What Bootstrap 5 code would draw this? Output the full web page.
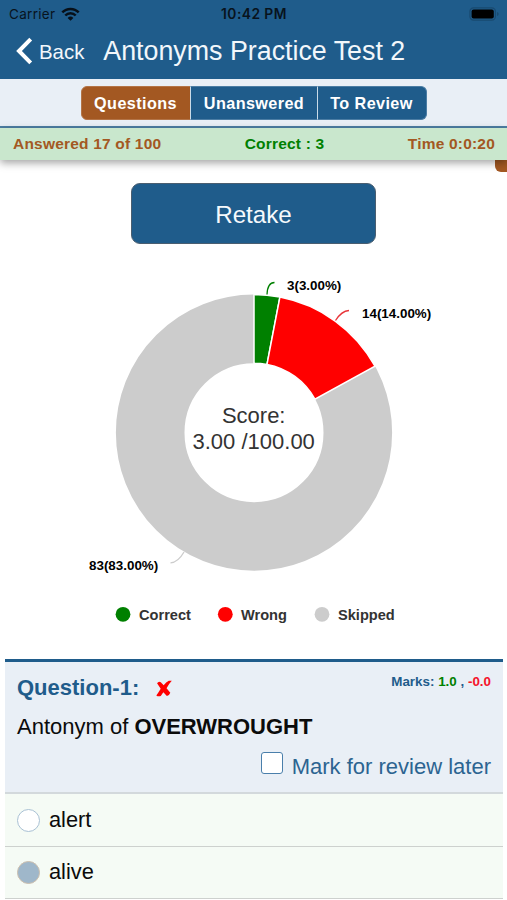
<!DOCTYPE html>
<html lang="en">
<head>
<meta charset="utf-8">
<meta name="viewport" content="width=device-width, initial-scale=1">
<title>Antonyms Practice Test 2</title>
<link href="https://cdn.jsdelivr.net/npm/bootstrap@5.3.0/dist/css/bootstrap.min.css" rel="stylesheet">
<style>
  :root { --navy: #1f5c8b; --rust: #a35822; --ice: #e9eff6; }
  body { font-family: "Liberation Sans", Arial, sans-serif; color: #0b0b0b; background: #fff; height: 900px; overflow: hidden; }
  .app-head { background: var(--navy); height: 79px; }
  .status { height: 28px; font: 500 13.5px/28px Inter, sans-serif; color: #08131d; padding: 0 7px 0 9px; display: grid; grid-template-columns: 1fr auto 1fr; }
  .status .carrier { font-weight: 400; letter-spacing: .3px; }
  .status .clock { font-weight: 600; font-size: 13.8px; letter-spacing: .45px; margin-right: 1px; }
  .title-row { height: 46px; padding-left: 15px; color: #f2f7fb; }
  .back-label { font-size: 20.4px; margin-left: 6px; line-height: 46px; padding-top: 2px; }
  .page-title { font-size: 26.8px; margin-left: 19px; line-height: 46px; font-weight: 400; color: #f2f7fb; }
  .tabs-bar { background: var(--ice); height: 49px; border-bottom: 2px solid #4d7fa4; padding-top: 7px; }
  .seg .btn { --bs-btn-color: #fff; --bs-btn-bg: var(--navy); --bs-btn-border-color: #4b7da4; --bs-btn-border-radius: 6px; height: 34px; padding: 0; font-weight: 700; font-size: 16.2px; letter-spacing: .4px; line-height: 32px; color: #fff; }
  .seg .btn.w1 { width: 110px; background: var(--rust); border-color: #b37447; }
  .seg .btn.w2 { width: 128px; border-left-color: #c9dbe8; border-right-width: 0; }
  .seg .btn.w3 { width: 110px; border-left-color: #c9dbe8; margin-left: 0; }
  .stats { background: #c9e7cd; height: 32px; padding: 0 12px 0 13px; font-size: 15.5px; font-weight: 700; letter-spacing: .2px; line-height: 31px; color: var(--rust); box-shadow: 0 3px 8px rgba(0,0,0,.36); z-index: 1; }
  .side-tab { right: 0; top: 150px; width: 12px; height: 22px; background: var(--rust); border-radius: 0 0 0 6px; z-index: 0; }
  .retake { width: 245px; height: 61px; margin-top: 23px; background: var(--navy); border: 1.5px solid #4a5e70; border-radius: 9px; color: #f5f9fc; font-size: 24.2px; padding: 1px 0 0; line-height: 60px; }
  .chart { height: 415px; }
  .q-head { background: var(--ice); border-top: 3px solid var(--navy); border-bottom: 2px solid #d3d9dc; height: 135px; padding: 0 12px; }
  .q-no { font-size: 22px; line-height: 30px; color: var(--navy); padding-top: 11px; }
  .q-marks { font-size: 13.4px; line-height: 20px; color: var(--navy); padding-top: 10px; }
  .q-text { font-size: 22px; line-height: 30px; padding-top: 9px; }
  .q-review { font-size: 22px; line-height: 30px; color: #2c6491; padding-top: 10px; }
  .box { width: 22px; height: 22px; border: 1.5px solid #4a7fab; border-radius: 3px; background: #fff; margin-right: 9px; margin-top: -8px; }
  .opt { background: #f5fbf5; height: 52.5px; border-bottom: 1.5px solid #cdd1ce; font-size: 21.8px; padding: 1px 12px 0; }
  .ring { width: 23px; height: 23px; border: 1.3px solid #a9c1d4; border-radius: 50%; background: #fff; margin-right: 9px; }
  .ring.on { background: #9fb7ca; border-color: #cdbfae; }
  .question { margin: 0 4px 0 5px; }
</style>
<script src="https://cdn.jsdelivr.net/npm/bootstrap@5.3.0/dist/js/bootstrap.bundle.min.js"></script>
</head>
<body>
<header class="app-head">
  <div class="status">
    <div class="carrier d-flex align-items-center">Carrier
      <svg style="margin-left:5px" width="21" height="16" viewBox="0 0 21 16" fill="none" stroke="#071019" stroke-width="2.5"><path d="M2.3 6.4a11.4 11.4 0 0 1 16.4 0M5.3 9.5a7.2 7.2 0 0 1 10.4 0"/><path d="M10.5 14.8l-2.9-2.9a4.1 4.1 0 0 1 5.8 0z" fill="#071019" stroke="none"/></svg>
    </div>
    <div class="clock">10:42 PM</div>
    <div class="d-flex justify-content-end align-items-center">
      <svg width="31" height="14" viewBox="0 0 31 14"><rect x=".9" y=".9" width="25.5" height="12.2" rx="3.6" fill="none" stroke="#194a70" stroke-width="1.2"/><rect x="2.6" y="2.6" width="22.2" height="8.8" rx="2" fill="#000"/><path d="M28 5v4q1.7-.6 1.7-2T28 5z" fill="#194a70"/></svg>
    </div>
  </div>
  <div class="title-row d-flex align-items-center">
    <svg width="18" height="28" viewBox="0 0 18 28" fill="none" stroke="#fff" stroke-width="4"><path d="M15.7 2.2L4 14l11.7 11.8"/></svg>
    <span class="back-label">Back</span>
    <h1 class="page-title mb-0">Antonyms Practice Test 2</h1>
  </div>
</header>
<nav class="tabs-bar d-flex justify-content-center">
  <div class="seg btn-group align-self-start">
    <button class="btn w1" type="button">Questions</button>
    <button class="btn w2" type="button">Unanswered</button>
    <button class="btn w3" type="button">To Review</button>
  </div>
</nav>
<div class="stats d-flex justify-content-between position-relative">
  <span>Answered 17 of 100</span><span style="color:green">Correct : 3</span><span>Time 0:0:20</span>
</div>
<div class="side-tab position-absolute"></div>
<main>
  <div class="d-flex justify-content-center">
    <button class="retake btn" type="button">Retake</button>
  </div>
  <svg class="chart d-block" width="507" viewBox="0 244 507 415" font-family="Liberation Sans, Arial, sans-serif">
    <circle cx="254" cy="432.7" r="103.8" fill="none" stroke="#ccc" stroke-width="68.6"/>
    <g stroke="#fff" stroke-width="1.5">
      <path d="M254 294.6A138.1 138.1 0 0 1 279.9 297.1L267 364.4A69.5 69.5 0 0 0 254 363.2z" fill="green"/>
      <path d="M279.9 297.1A138.1 138.1 0 0 1 375 366.2L314.9 399.2A69.5 69.5 0 0 0 267 364.4z" fill="red"/>
    </g>
    <g fill="none" stroke-width="1.3">
      <path d="M267 294.5Q267.5 282.5 274.5 282.5" stroke="green"/>
      <path d="M335.5 320.5Q341.5 311 349 310.5" stroke="#e8353a"/>
      <path d="M184 552Q178 562.5 170.5 562.8" stroke="#ccc"/>
    </g>
    <g font-size="13.4" font-weight="700" fill="#000">
      <text x="287" y="290.4">3(3.00%)</text>
      <text x="362" y="318.4">14(14.00%)</text>
      <text x="89" y="570.4">83(83.00%)</text>
    </g>
    <g font-size="22" fill="#333" text-anchor="middle">
      <text x="253.7" y="423.4">Score:</text>
      <text x="253.7" y="449.2">3.00 /100.00</text>
    </g>
    <circle cx="123" cy="614.3" r="7.4" fill="green"/>
    <circle cx="225.3" cy="614.3" r="7.4" fill="red"/>
    <circle cx="322" cy="614.3" r="7.4" fill="#ccc"/>
    <g font-size="14.6" font-weight="700" fill="#333">
      <text x="139" y="620.3">Correct</text>
      <text x="241" y="620.3">Wrong</text>
      <text x="338" y="620.3">Skipped</text>
    </g>
  </svg>
  <section class="question">
    <div class="q-head">
      <div class="d-flex justify-content-between align-items-start">
        <div class="q-no fw-bold d-flex align-items-center">Question-1:
          <svg width="16" height="17" viewBox="0 0 15 17" preserveAspectRatio="none" style="margin-left:17px"><path d="M1 3.2Q2.5 .8 4.5 2.2L7.2 5.3Q9.5 2 12 .7L14.8.8Q12 4 9.9 8.2L13.4 12.8Q12.8 15.2 10.2 16L6.9 12.2Q5.4 14.5 4.5 15.9 2 16.8.3 15.4 2.6 12.2 4.4 8.8z" fill="red"/></svg>
        </div>
        <div class="q-marks fw-bold">Marks: <span style="color:green">1.0</span> , <span style="color:#f5132a">-0.0</span></div>
      </div>
      <div class="q-text">Antonym of <b>OVERWROUGHT</b></div>
      <div class="q-review d-flex justify-content-end align-items-center"><span class="box"></span>Mark for review later</div>
    </div>
    <div class="opt d-flex align-items-center"><span class="ring"></span>alert</div>
    <div class="opt d-flex align-items-center"><span class="ring on"></span>alive</div>
  </section>
</main>
</body>
</html>
